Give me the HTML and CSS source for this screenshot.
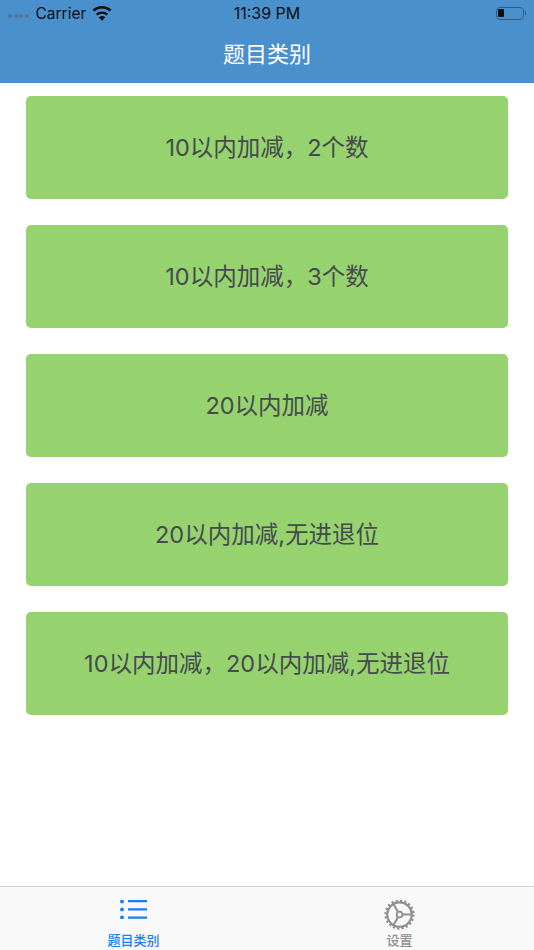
FILE: index.html
```html
<!DOCTYPE html>
<html lang="zh">
<head>
    <meta charset="UTF-8">
    <meta name="viewport" content="width=device-width, initial-scale=1.0">
    <title>题目类别</title>
    <link rel="stylesheet" href="styles.css">
</head>
<body>

    <div class="app">
        <div class="header">
            <div class="status-bar">
                <div class="status-left">
                    <div class="signal">
                        <span></span><span></span><span></span><span></span>
                    </div>
                    <span class="carrier">Carrier</span>
                    <svg class="wifi" viewBox="0 0 20 15" width="20" height="15">
                        <path d="M10 14.8 L6.6 11.2 C8.6 9.5 11.4 9.5 13.4 11.2 Z" fill="#0b0f14"/>
                        <path d="M4.6 8.6 C7.6 5.9 12.4 5.9 15.4 8.6" fill="none" stroke="#0b0f14" stroke-width="2.4"/>
                        <path d="M1.4 4.6 C6.4 0.2 13.6 0.2 18.6 4.6" fill="none" stroke="#0b0f14" stroke-width="2.6"/>
                    </svg>
                </div>
                <div class="status-time">11:39 PM</div>
                <div class="status-right">
                    <div class="battery"><span class="battery-level"></span></div>
                    <span class="battery-tip"></span>
                </div>
            </div>
            <div class="nav-title">题目类别</div>
        </div>

        <div class="list">
            <div class="item">10以内加减，2个数</div>
            <div class="item">10以内加减，3个数</div>
            <div class="item">20以内加减</div>
            <div class="item">20以内加减,无进退位</div>
            <div class="item">10以内加减，20以内加减,无进退位</div>
        </div>

        <div class="tabbar">
            <div class="tab active">
                <div class="tab-icon">
                    <svg viewBox="0 0 28 19" width="28" height="19">
                        <circle cx="2" cy="1.5" r="1.9" fill="#147efb"/>
                        <circle cx="2" cy="9.5" r="1.9" fill="#147efb"/>
                        <circle cx="2" cy="17.5" r="1.9" fill="#147efb"/>
                        <path d="M8 1.2 H27 M8 9.4 H27 M8 17.6 H27" stroke="#147efb" stroke-width="2.2" fill="none"/>
                    </svg>
                </div>
                <span class="tab-label">题目类别</span>
            </div>
            <div class="tab tab-settings">
                <div class="tab-icon">
                    <svg viewBox="0 1 32 32" width="31" height="31">
                        <circle cx="16" cy="16" r="12.6" fill="none" stroke="#8e8e8e" stroke-width="2.2"/>
                        <circle cx="16" cy="16" r="14.4" fill="none" stroke="#8e8e8e" stroke-width="2.4" stroke-dasharray="2.2 2.33"/>
                        <circle cx="16" cy="16" r="3" fill="none" stroke="#8e8e8e" stroke-width="1.8"/>
                        <path d="M19 16 H28 M14.5 13.4 L9.8 5.2 M14.5 18.6 L9.8 26.8" stroke="#8e8e8e" stroke-width="2.1" fill="none"/>
                    </svg>
                </div>
                <span class="tab-label">设置</span>
            </div>
        </div>
    </div>

</body>
</html>
```

FILE: styles.css
```css
* {
    box-sizing: border-box;
}

body {
    margin: 0;
    font-family: Inter, "Noto Sans CJK SC", sans-serif;
    background-color: #fff;
}

.app {
    width: 534px;
    height: 950px;
    display: flex;
    flex-direction: column;
    overflow: hidden;
}

.header {
    height: 83px;
    background-color: #4a90cc;
    flex-shrink: 0;
}

.status-bar {
    height: 26px;
    display: grid;
    grid-template-columns: 1fr auto 1fr;
    align-items: center;
    color: #0b0f14;
    font-size: 16px;
}

.status-left {
    display: flex;
    align-items: center;
    padding-left: 8px;
}

.signal {
    display: flex;
    gap: 1.5px;
    margin-top: 6px;
    margin-right: 7px;
}

.signal span {
    width: 4px;
    height: 4px;
    border-radius: 50%;
    background-color: #58728c;
}

.carrier {
    font-size: 15.5px;
}

.wifi {
    margin-left: 6px;
}

.status-right {
    display: flex;
    align-items: center;
    justify-content: flex-end;
    padding-right: 8px;
}

.battery {
    width: 28px;
    height: 13px;
    border: 1.5px solid #2f5b84;
    border-radius: 4px;
    padding: 1.5px;
}

.battery-level {
    display: block;
    width: 6px;
    height: 100%;
    border-radius: 1px;
    background-color: #0b0f14;
}

.battery-tip {
    width: 1.5px;
    height: 4px;
    margin-left: 1px;
    background-color: #2f5b84;
}

.nav-title {
    margin-top: 12px;
    text-align: center;
    color: #fff;
    font-size: 22px;
    line-height: 32px;
}

.list {
    flex: 1;
    padding: 13px 26px 0;
    display: flex;
    flex-direction: column;
    gap: 26px;
}

.item {
    height: 103px;
    padding-bottom: 3px;
    background-color: #96d36e;
    border-radius: 5px;
    display: flex;
    align-items: center;
    justify-content: center;
    color: #454a4f;
    font-size: 23.5px;
}

.tabbar {
    height: 64px;
    flex-shrink: 0;
    display: grid;
    grid-template-columns: 1fr 1fr;
    border-top: 1px solid #d4d4d4;
    background-color: #f9f9f9;
}

.tab {
    display: flex;
    flex-direction: column;
    align-items: center;
    padding-top: 13px;
    color: #8e8e8e;
}

.tab.active {
    color: #147efb;
}

.tab-settings {
    padding-right: 2px;
}

.tab-icon {
    height: 32px;
    display: flex;
    align-items: flex-start;
}

.tab-label {
    font-size: 13px;
    line-height: 16px;
    font-weight: 500;
}
```
